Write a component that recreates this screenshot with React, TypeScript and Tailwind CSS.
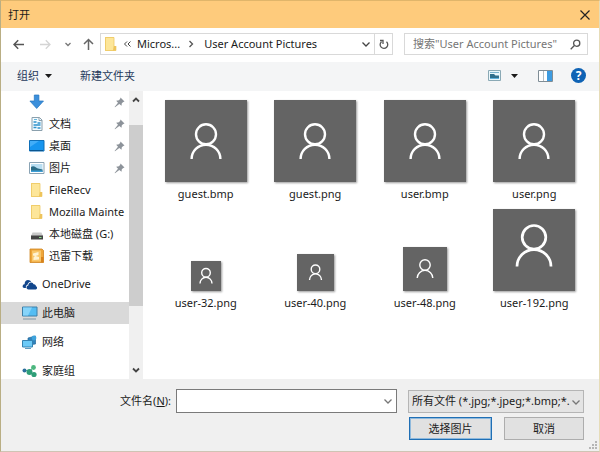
import React from 'react';

type Glyph = { cy: number; r: number; top: number; bottom: number; half: number; stroke: number };
type FileItem = { name: string; size: number; glyph: Glyph };

const large: Glyph = { cy: 34.3, r: 10, top: 44.7, bottom: 59, half: 14.4, stroke: 2.4 };

const files: FileItem[] = [
  { name: 'guest.bmp', size: 82, glyph: large },
  { name: 'guest.png', size: 82, glyph: large },
  { name: 'user.bmp', size: 82, glyph: large },
  { name: 'user.png', size: 82, glyph: large },
  { name: 'user-32.png', size: 30, glyph: { cy: 11.8, r: 4.3, top: 16.3, bottom: 22.5, half: 6, stroke: 1.4 } },
  { name: 'user-40.png', size: 37, glyph: { cy: 15.3, r: 4.3, top: 19.8, bottom: 26, half: 6, stroke: 1.4 } },
  { name: 'user-48.png', size: 44, glyph: { cy: 18, r: 5.2, top: 23.4, bottom: 31, half: 7.8, stroke: 1.4 } },
  { name: 'user-192.png', size: 82, glyph: { cy: 28.3, r: 11.8, top: 40.6, bottom: 57.5, half: 17, stroke: 2.7 } },
];

function Thumbnail({ size, glyph }: { size: number; glyph: Glyph }) {
  const c = size / 2;
  return (
    <svg
      width={size}
      height={size}
      viewBox={`0 0 ${size} ${size}`}
      className="bg-[#646464] shadow-[1px_1px_2px_rgba(0,0,0,0.4)]"
      fill="none"
      stroke="#fff"
      strokeWidth={glyph.stroke}
      aria-hidden="true"
    >
      <circle cx={c} cy={glyph.cy} r={glyph.r} />
      <path
        d={`M${c - glyph.half} ${glyph.bottom}A${glyph.half} ${glyph.bottom - glyph.top} 0 0 1 ${c + glyph.half} ${glyph.bottom}`}
      />
    </svg>
  );
}

function Chevron({ className = '', d = 'M1.5 3.5 5 7l3.5-3.5', width = 1.3 }: { className?: string; d?: string; width?: number }) {
  return (
    <svg className={className} width="10" height="10" viewBox="0 0 10 10" fill="none" stroke="currentColor" strokeWidth={width} aria-hidden="true">
      <path d={d} />
    </svg>
  );
}

function FolderIcon({ className = '' }: { className?: string }) {
  return (
    <svg className={className} width="16" height="16" viewBox="0 0 16 16" aria-hidden="true">
      <path d="M2 1h9v10h2v4H2z" fill="#f6d576" />
      <path d="M2.5 1.5h8.5v13H2.5z" fill="#fde699" stroke="#edc964" strokeWidth="0.8" />
      <path d="M11 10h2.3v4.6H10z" fill="#eec45c" />
    </svg>
  );
}

function DownloadIcon() {
  return (
    <svg width="16" height="16" viewBox="0 0 16 16" aria-hidden="true">
      <path d="M5.3 1h4.6v6h4.6l-6.8 7.5L.9 7h4.4z" fill="#3b8fdb" stroke="#2374bf" strokeWidth="0.7" />
    </svg>
  );
}

function DocumentIcon() {
  return (
    <svg width="16" height="16" viewBox="0 0 16 16" aria-hidden="true">
      <path d="M3 1.5h7.5L13 4v10.5H3z" fill="#f4fbff" stroke="#8ba0ad" />
      <path d="M10 1.5V4.5h3" fill="none" stroke="#8ba0ad" />
      <path d="M4.5 6h3M8.5 7H11.5M4.5 9h7M4.5 11.5h3M8.5 12h3" stroke="#2f92cc" strokeWidth="1.3" />
      <path d="M5 3.5h3" stroke="#66b7dd" />
    </svg>
  );
}

function DesktopIcon() {
  return (
    <svg width="16" height="16" viewBox="0 0 16 16" aria-hidden="true">
      <path d="M.5 2.5h14.5v10.5H.5z" fill="#1795ef" stroke="#0f6fb8" />
      <path d="M1 3h9L1 9z" fill="#42adf8" />
      <path d="M1 12.5h13" stroke="#0a558f" />
    </svg>
  );
}

function PictureIcon() {
  return (
    <svg width="16" height="16" viewBox="0 0 16 16" aria-hidden="true">
      <path d="M.5 2.5h14.5v11H.5z" fill="#fff" stroke="#8aa3b4" />
      <path d="M2 4h11.5v8H2z" fill="#b9def2" />
      <path d="M2 7c3-2 5 1 7 1.5l4.5 1V12H2z" fill="#2b6c86" />
      <path d="M2 10.5h11.5V12H2z" fill="#3fa0d8" />
    </svg>
  );
}

function DriveIcon() {
  return (
    <svg width="16" height="16" viewBox="0 0 16 16" aria-hidden="true">
      <path d="M3.5 6.5h9L14 10H2z" fill="#c9c9c9" />
      <path d="M2 9.5h12v4H2z" fill="#444" />
      <path d="M10 11h2.5v1H10z" fill="#8fe08a" />
    </svg>
  );
}

function ThunderIcon() {
  return (
    <svg width="16" height="16" viewBox="0 0 16 16" aria-hidden="true">
      <path d="M1 1h12l1.5 1.5v12H1z" fill="#efa63a" stroke="#cf8522" strokeWidth="0.8" />
      <path d="M3 2.5h9v11H3z" fill="#f9c76b" />
      <path d="M4 5.5 9.5 4v3l-3 1 3.5 1v2.5L4.5 12V9.5L6 8 4 7.5z" fill="#fff3d4" />
      <path d="M12 9h2.5v5.5H12z" fill="#d8821c" />
    </svg>
  );
}

function OneDriveIcon() {
  return (
    <svg width="16" height="16" viewBox="0 0 16 16" aria-hidden="true">
      <path d="M4 12H2.5C.8 12 .3 10.7.8 9.5 1.2 8.5 2 8.3 2.6 8.3 2.5 5.5 4.2 4 6 4c1.6 0 2.5.7 3.2 1.8C6.5 5.8 5.6 8 5.5 8.8 4 9.2 3.5 10.5 4 12z" fill="#12468c" />
      <path d="M6.5 13.5c-2.6 0-2.6-3.6-.2-3.9C6.3 7.3 8 6.3 9.3 6.5c1.2.1 2 .9 2.3 1.8 1.6-.2 2.4.9 2.3 2 1.6.2 1.6 3.2-.2 3.2z" fill="#12468c" />
    </svg>
  );
}

function ComputerIcon() {
  return (
    <svg width="16" height="16" viewBox="0 0 16 16" aria-hidden="true">
      <path d="M.5 2h14.5v9H.5z" fill="#54bdf3" stroke="#3c7fa8" />
      <path d="M1 2.5h9l-4 8H1z" fill="#86d4fa" />
      <path d="M1 14h13" stroke="#8aa0ae" strokeWidth="1.2" />
    </svg>
  );
}

function NetworkIcon() {
  return (
    <svg width="16" height="16" viewBox="0 0 16 16" aria-hidden="true">
      <path d="M6 4 13.5 2v8L6 11z" fill="#2f83bd" stroke="#27699a" strokeWidth="0.7" />
      <path d="M.5 6.5h10v6.5H.5z" fill="#6ccaf7" stroke="#3582b1" />
      <path d="M3 14.5h6" stroke="#5e9cc0" />
      <circle cx="12" cy="4" r="2.4" fill="#3fa3dc" />
    </svg>
  );
}

function HomegroupIcon() {
  return (
    <svg width="16" height="16" viewBox="0 0 16 16" aria-hidden="true">
      <path d="M2.5 7 8 8.5 11 4M8 8.5l4 3.5" stroke="#6bb7a0" fill="none" />
      <circle cx="2.5" cy="7.5" r="2" fill="#2c6f9c" />
      <circle cx="7.5" cy="9" r="3" fill="#2e9e78" />
      <circle cx="11.5" cy="4.5" r="2.4" fill="#4cb77e" />
      <circle cx="12" cy="11.5" r="2.6" fill="#2e9e78" />
    </svg>
  );
}

function PinIcon() {
  return (
    <svg width="11" height="11" viewBox="0 0 11 11" aria-hidden="true" className="shrink-0">
      <path d="M6.5.5 10.5 4.5 9.3 5 7.8 6.2 7.5 8.8 5.3 7 1 10.3.6 10 4 5.7 2.2 3.8 5 3.3 6.2 1.7z" fill="#8d939a" />
    </svg>
  );
}

const quickAccess = [
  { name: '', icon: <DownloadIcon />, pinned: true },
  { name: '文档', icon: <DocumentIcon />, pinned: true },
  { name: '桌面', icon: <DesktopIcon />, pinned: true },
  { name: '图片', icon: <PictureIcon />, pinned: true },
  { name: 'FileRecv', icon: <FolderIcon />, pinned: false },
  { name: 'Mozilla Mainte', icon: <FolderIcon />, pinned: false },
  { name: '本地磁盘 (G:)', icon: <DriveIcon />, pinned: false },
  { name: '迅雷下载', icon: <ThunderIcon />, pinned: false },
];

const places = [
  { name: 'OneDrive', icon: <OneDriveIcon />, selected: false },
  { name: '此电脑', icon: <ComputerIcon />, selected: true },
  { name: '网络', icon: <NetworkIcon />, selected: false },
  { name: '家庭组', icon: <HomegroupIcon />, selected: false },
];

function AddressRow() {
  return (
    <div className="flex shrink-0 items-center bg-white pt-[5px] pb-[7px] pl-3 pr-[11px]">
      <button type="button" aria-label="后退" className="text-[#555]">
        <svg width="11" height="11" viewBox="0 0 11 11" fill="none" stroke="currentColor" strokeWidth="1.5">
          <path d="M11 5.5H1.2M5.2 1.3 1 5.5l4.2 4.2" />
        </svg>
      </button>
      <button type="button" aria-label="前进" className="ml-4 text-[#d4d4d4]">
        <svg width="11" height="11" viewBox="0 0 11 11" fill="none" stroke="currentColor" strokeWidth="1.3">
          <path d="M0 5.5h9.8M5.8 1.3 10 5.5 5.8 9.7" />
        </svg>
      </button>
      <button type="button" aria-label="最近位置" className="ml-3 text-[#777]">
        <Chevron d="M2.5 4 5 6.5l2.5-2.5" />
      </button>
      <button type="button" aria-label="向上" className="ml-2.5 text-[#666]">
        <svg width="11" height="12" viewBox="0 0 11 12" fill="none" stroke="currentColor" strokeWidth="1.5">
          <path d="M5.5 12V1.5M1 6 5.5 1.5 10 6" />
        </svg>
      </button>
      <div className="ml-1.5 flex h-[22px] min-w-0 flex-1 items-center border border-[#d9d9d9] pl-0.5">
        <FolderIcon className="shrink-0" />
        <button type="button" aria-label="上级" className="ml-1 text-[#444]">
          <Chevron d="M4 2.5 1.5 5 4 7.5M7.5 2.5 5 5l2.5 2.5" width={1} />
        </button>
        <button type="button" className="ml-1 whitespace-nowrap">Micros...</button>
        <Chevron d="M3.5 2 6.5 5l-3 3" className="ml-1.5 shrink-0 text-[#555]" />
        <button type="button" className="ml-2 min-w-0 flex-1 truncate text-left">User Account Pictures</button>
        <button type="button" aria-label="历史" className="mr-[3px] text-[#444]">
          <Chevron />
        </button>
        <button type="button" aria-label="刷新" className="flex h-full w-[18px] items-center justify-center border-l border-[#d9d9d9] text-[#555]">
          <svg width="10" height="11" viewBox="0 0 10 11" fill="none" stroke="currentColor" strokeWidth="1.3">
            <path d="M7.5 2.8A3.8 3.8 0 1 1 2.5 2.7M1 1.5h3V5" />
          </svg>
        </button>
      </div>
      <div className="ml-[11px] flex h-[22px] w-[184px] items-center border border-[#d9d9d9] pl-2 pr-1.5">
        <input
          type="search"
          aria-label="搜索"
          placeholder={'搜索"User Account Pictures"'}
          className="w-full min-w-0 flex-1 bg-transparent outline-none placeholder:text-[#767676]"
        />
        <svg width="11" height="11" viewBox="0 0 11 11" fill="none" stroke="#555" strokeWidth="1.3" className="shrink-0">
          <circle cx="6.7" cy="4.2" r="3.1" />
          <path d="M4.4 6.5.7 10.2" />
        </svg>
      </div>
    </div>
  );
}

function Toolbar() {
  return (
    <div className="flex h-[29px] shrink-0 items-center bg-[#f4f5f6] pb-0.5 pl-4 pr-[13px] text-[#1e395b]">
      <button type="button" className="flex items-center gap-1.5">
        组织
        <svg width="7" height="4" viewBox="0 0 7 4" fill="#1b1b1b"><path d="M0 0h7L3.5 4z" /></svg>
      </button>
      <button type="button" className="ml-7">新建文件夹</button>
      <button type="button" aria-label="更改视图" className="ml-auto flex items-center gap-2.5">
        <svg width="13" height="11" viewBox="0 0 13 11">
          <path d="M.5.5h12v10H.5z" fill="#eaf6fb" stroke="#8aa9b5" />
          <path d="M2 2.5h9" stroke="#7cb3cf" />
          <path d="M2 4h4l1.5 1.5H11V8H2z" fill="#2f6f8d" />
          <path d="M2 8.5h9" stroke="#5fb1de" />
        </svg>
        <svg width="7" height="4" viewBox="0 0 7 4" fill="#1b1b1b"><path d="M0 0h7L3.5 4z" /></svg>
      </button>
      <button type="button" aria-label="预览窗格" className="ml-5">
        <svg width="15" height="12" viewBox="0 0 15 12">
          <path d="M.5.5h14v11H.5z" fill="#fff" stroke="#7f8d96" />
          <path d="M5.5 1v10" stroke="#b4bdc3" />
          <path d="M9 1h5v10H9z" fill="#3d9be0" />
        </svg>
      </button>
      <button type="button" aria-label="帮助" className="ml-[18px] flex size-[15px] items-center justify-center rounded-full bg-[#0f63b5] text-xs font-bold text-white">
        ?
      </button>
    </div>
  );
}

function Sidebar() {
  return (
    <div className="flex w-[142px] shrink-0 overflow-hidden">
      <nav className="min-w-0 flex-1 overflow-hidden">
        <ul>
          {quickAccess.map((item, i) => (
            <li key={i} className="flex h-[22px] items-center gap-1 pl-7 pr-1">
              <a href="#" aria-label={item.name || '下载'} className="flex min-w-0 flex-1 items-center gap-1 whitespace-nowrap">
                <span className="shrink-0">{item.icon}</span>
                {item.name}
              </a>
              {item.pinned && <PinIcon />}
            </li>
          ))}
        </ul>
        <ul className="mt-1.5 flex flex-col gap-[7px]">
          {places.map((item) => (
            <li key={item.name} className={item.selected ? 'bg-[#d9d9d9]' : ''}>
              <a href="#" className="flex h-[22px] items-center gap-1 pl-[21px]">
                {item.icon}
                {item.name}
              </a>
            </li>
          ))}
        </ul>
      </nav>
      <div className="flex w-[14px] shrink-0 flex-col items-center bg-[#f0f0f0] text-[#444]">
        <Chevron d="M2 6.5 5 3.5l3 3" width={1.8} className="mt-1 mb-5 shrink-0" />
        <div className="h-[63%] w-full bg-[#cdcdcd]" />
        <Chevron d="M2 3.5 5 6.5l3-3" width={1.8} className="mt-auto mb-1 shrink-0" />
      </div>
    </div>
  );
}

function FileGrid() {
  return (
    <ul className="grid min-w-0 flex-1 grid-cols-[repeat(auto-fill,minmax(104px,1fr))] content-start gap-y-[3px] overflow-hidden pt-[9px] pl-2 pr-[10px]">
      {files.map((file) => (
        <li key={file.name}>
          <button type="button" className="flex h-full w-full flex-col items-center justify-end">
            <Thumbnail size={file.size} glyph={file.glyph} />
            <span className="leading-6">{file.name}</span>
          </button>
        </li>
      ))}
    </ul>
  );
}

function Footer() {
  return (
    <form className="relative shrink-0 bg-[#f0f0f0] pt-[10px] pb-[11px] pr-[15px]" onSubmit={(e) => e.preventDefault()}>
      <div className="flex items-center">
        <label htmlFor="filename" className="w-[175px] shrink-0 pr-[5px] text-right">
          文件名(<u>N</u>):
        </label>
        <div className="flex h-6 min-w-0 flex-1 items-center border border-[#7a7a7a] bg-white pr-[3px]">
          <input id="filename" type="text" className="h-full min-w-0 flex-1 px-1 outline-none" />
          <button type="button" aria-label="展开" className="text-[#777]"><Chevron /></button>
        </div>
        <div className="relative ml-[11px] w-44 shrink-0">
          <select aria-label="文件类型" className="h-[23px] w-full appearance-none border border-[#b5b5b5] bg-[#e4e4e4] pl-[3px] pr-3">
            <option>所有文件 (*.jpg;*.jpeg;*.bmp;*.</option>
          </select>
          <Chevron className="pointer-events-none absolute right-[3px] top-[7px] text-[#777]" />
        </div>
      </div>
      <div className="mt-1 flex justify-end gap-3">
        <button type="submit" className="h-[23px] w-[83px] border border-[#1f6fb5] bg-[#e1e1e1] ring-1 ring-inset ring-[#8fb9dc]">选择图片</button>
        <button type="button" className="h-[23px] w-20 border border-[#adadad] bg-[#e1e1e1]">取消</button>
      </div>
      <svg className="absolute right-0.5 bottom-0.5" width="8" height="8" viewBox="0 0 8 8" fill="#b5b5b5" aria-hidden="true">
        <path d="M6 0h2v2H6zM3 3h2v2H3zM6 3h2v2H6zM0 6h2v2H0zM3 6h2v2H3zM6 6h2v2H6z" />
      </svg>
    </form>
  );
}

export default function App() {
  return (
    <div className="flex h-screen flex-col border border-t-[#e0b56a] border-r-[#e6dcb8] border-b-[#cfc4b4] border-l-[#b9ae84] bg-white font-['Noto_Sans','Noto_Sans_CJK_SC',sans-serif] text-[11px] leading-4 text-[#1b1b1b]">
      <header className="flex h-[27px] shrink-0 items-center justify-between bg-[#fecb7c] pl-[7px] pr-[9px]">
        <h1>打开</h1>
        <button type="button" aria-label="关闭">
          <svg width="10" height="10" viewBox="0 0 10 10" stroke="#222" strokeWidth="1.2"><path d="M.5.5l9 9M9.5.5l-9 9" /></svg>
        </button>
      </header>
      <AddressRow />
      <Toolbar />
      <main className="flex min-h-0 flex-1">
        <Sidebar />
        <FileGrid />
      </main>
      <Footer />
    </div>
  );
}
